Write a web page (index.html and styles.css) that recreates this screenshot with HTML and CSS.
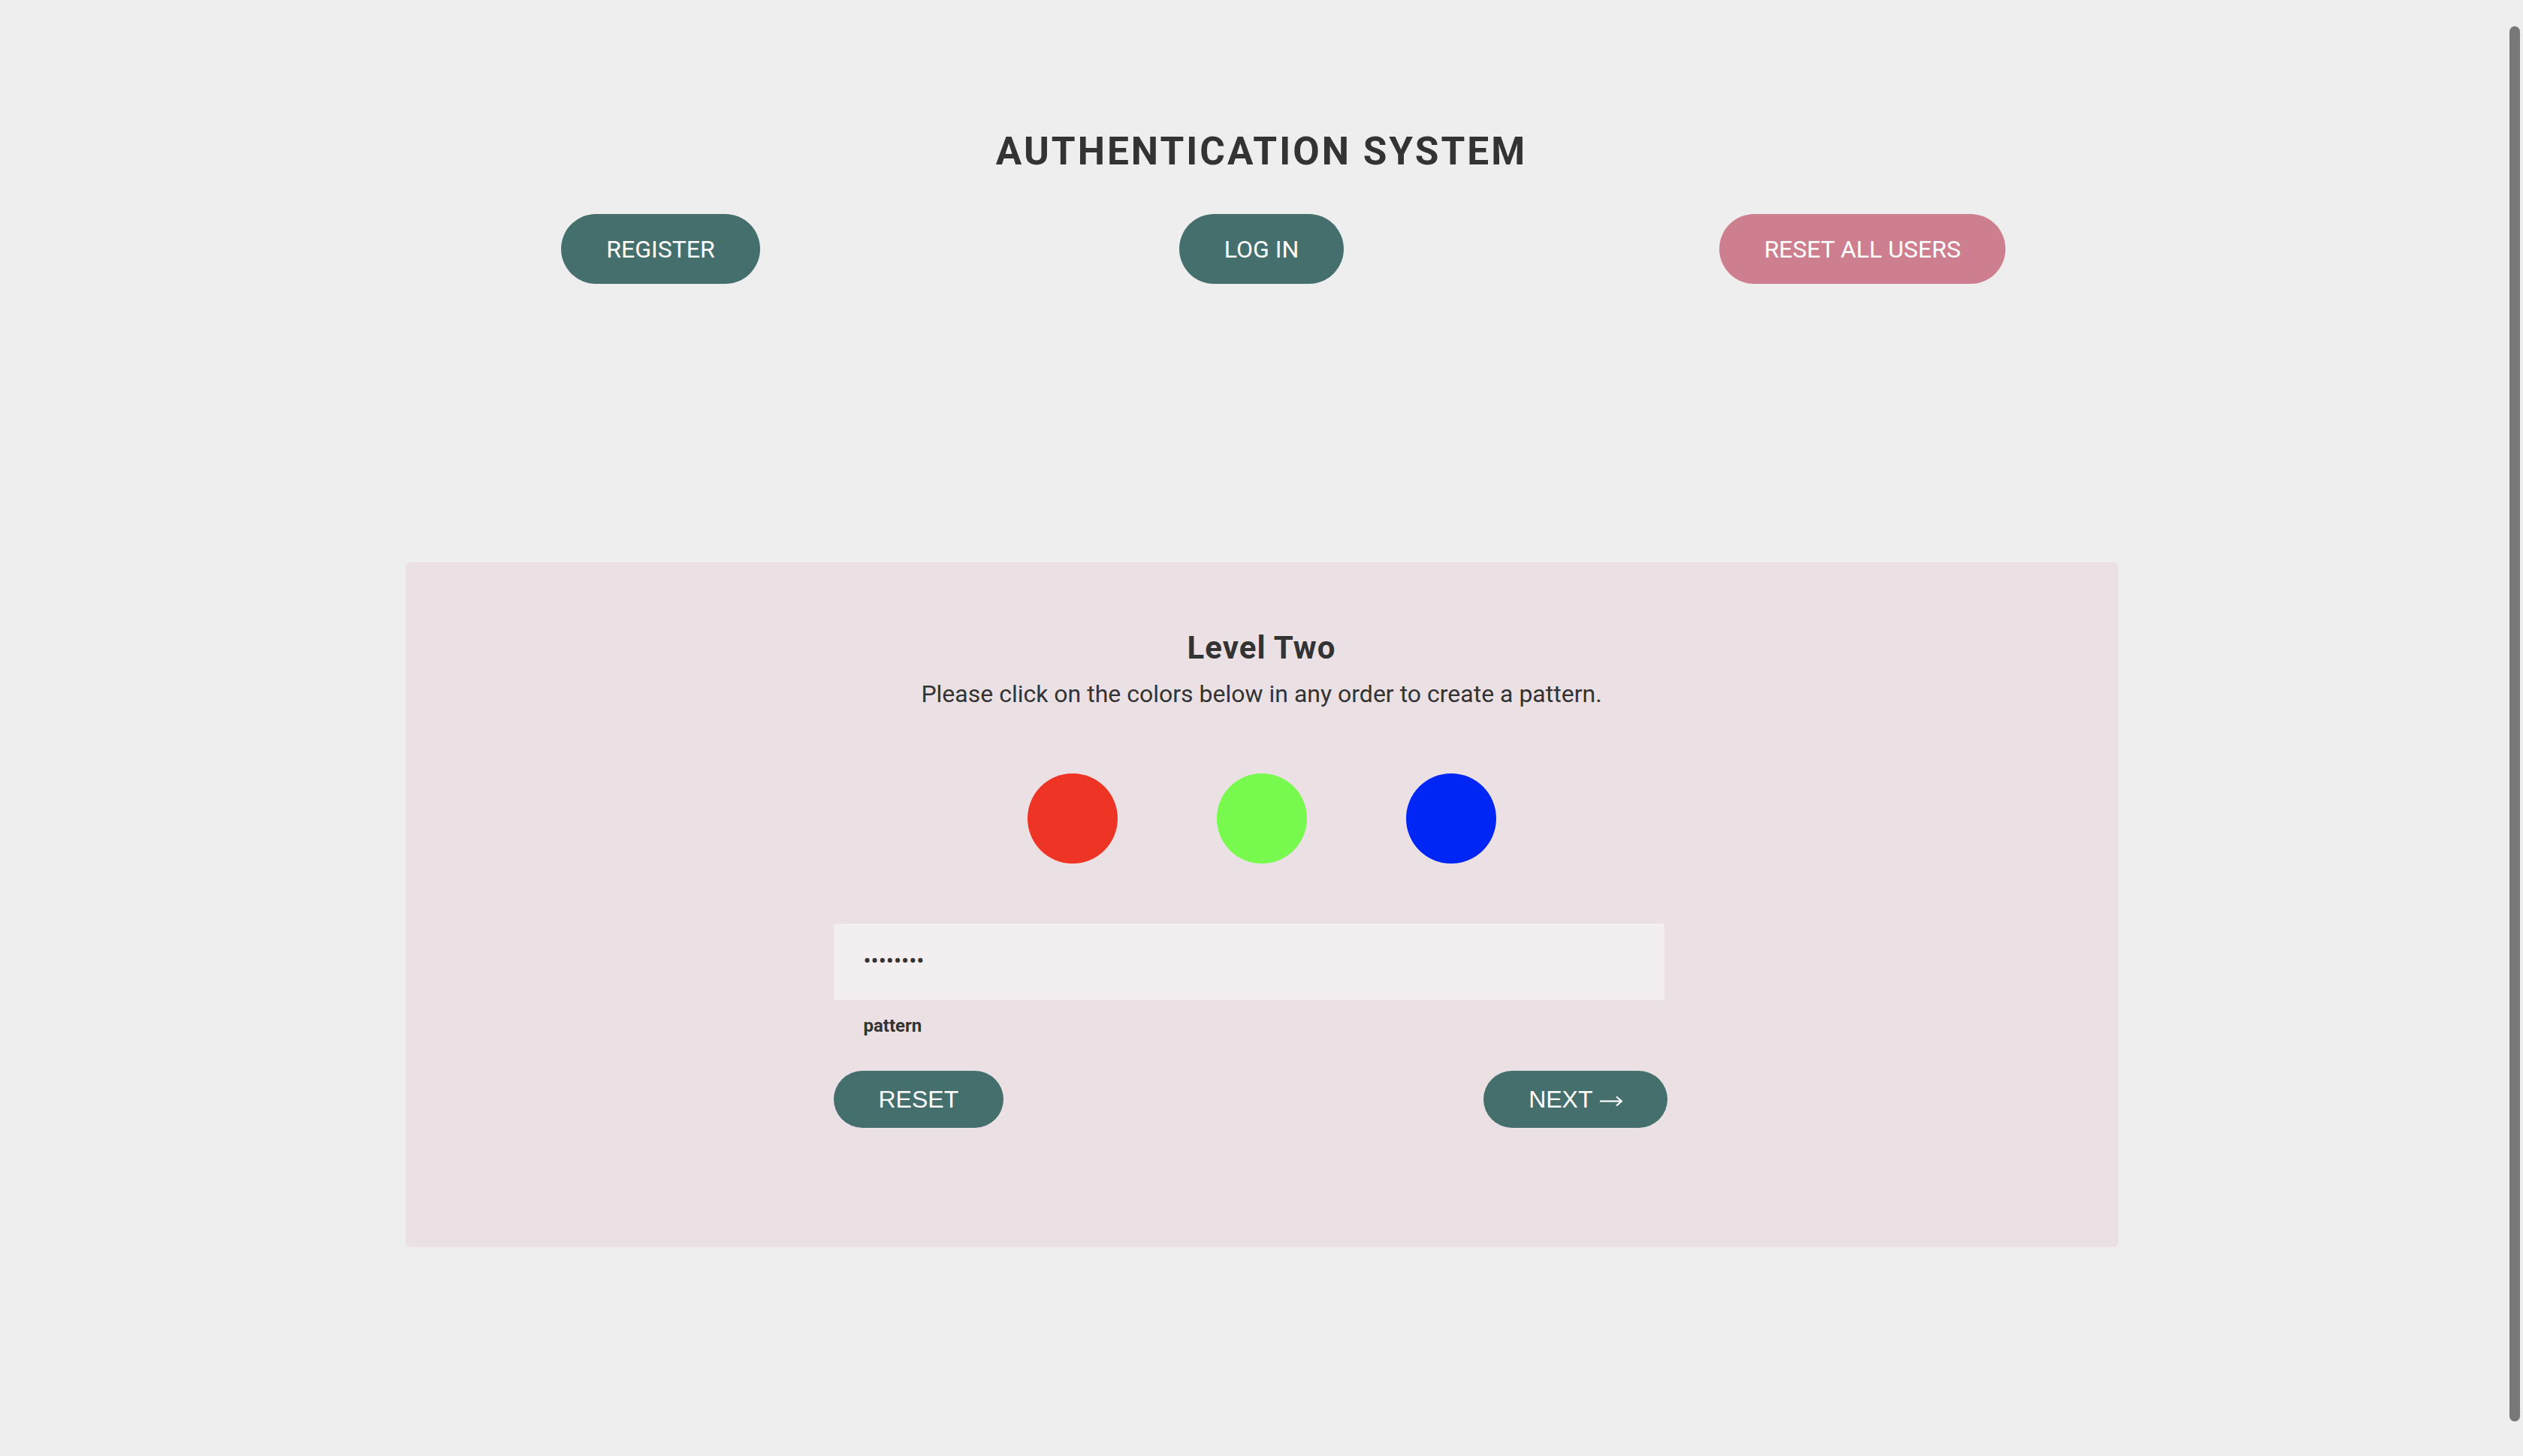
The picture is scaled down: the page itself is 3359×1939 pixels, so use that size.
FILE: index.html
```html
<!DOCTYPE html>
<html lang="en">
<head>
<meta charset="utf-8">
<title>Authentication System</title>
<link rel="stylesheet" href="styles.css">
</head>
<body>
<header class="top">
  <h1 class="title">AUTHENTICATION SYSTEM</h1>
  <nav class="nav">
    <button class="pill pill-teal" type="button">REGISTER</button>
    <button class="pill pill-teal" type="button">LOG IN</button>
    <button class="pill pill-pink" type="button">RESET ALL USERS</button>
  </nav>
</header>
<main class="card">
  <h2 class="level">Level Two</h2>
  <p class="hint">Please click on the colors below in any order to create a pattern.</p>
  <div class="swatches">
    <span class="swatch swatch-red"></span>
    <span class="swatch swatch-green"></span>
    <span class="swatch swatch-blue"></span>
  </div>
  <form class="form">
    <input class="field" type="password" value="12345678" aria-label="pattern">
    <label class="field-label">pattern</label>
    <div class="actions">
      <button class="small-btn" type="button">RESET</button>
      <button class="small-btn" type="button">NEXT <svg class="arrow" width="30" height="14" viewBox="0 0 30 14" aria-hidden="true"><path d="M0 7.5H28.5" stroke="#ffffff" stroke-width="2.2" fill="none"/><path d="M22 1.5L29 7.5L22 13.5" stroke="#ffffff" stroke-width="2.2" fill="none"/></svg></button>
    </div>
  </form>
</main>
<div class="scrollbar"></div>
</body>
</html>
```
FILE: styles.css
```css
html, body {
  margin: 0;
  padding: 0;
}
body {
  background: #eeeeee;
  font-family: Roboto, "Noto Sans", sans-serif;
  color: #333333;
}
.top {
  padding-top: 176px;
}
.title {
  margin: 0;
  font-size: 51.4px;
  line-height: 1;
  font-weight: 700;
  letter-spacing: 3px;
  text-align: center;
  color: #333333;
}
.nav {
  margin-top: 58px;
  display: grid;
  grid-template-columns: repeat(3, 800px);
  justify-content: center;
  justify-items: center;
}
.pill {
  height: 93px;
  padding: 0 60px;
  border: none;
  border-radius: 47px;
  color: #ffffff;
  font-family: Roboto, sans-serif;
  font-size: 32px;
  display: inline-flex;
  align-items: center;
  justify-content: center;
}
.pill-teal { background: #456f6d; }
.pill-pink { background: #cd7f8f; }
.card {
  display: block;
  box-sizing: border-box;
  width: 2280px;
  height: 912px;
  margin: 371px auto 0;
  padding-top: 93px;
  background: #ebe1e4;
  border-radius: 6px;
}
.level {
  margin: 0;
  text-align: center;
  font-size: 42px;
  line-height: 1;
  font-weight: 700;
  letter-spacing: 1px;
  color: #333333;
}
.hint {
  margin: 24px 0 0;
  text-align: center;
  font-size: 32px;
  line-height: 1;
  color: #333333;
}
.swatches {
  margin-top: 90px;
  display: flex;
  justify-content: center;
  gap: 132px;
}
.swatch {
  width: 120px;
  height: 120px;
  border-radius: 50%;
}
.swatch-red { background: #ee3424; }
.swatch-green { background: #78f94e; }
.swatch-blue { background: #0026f5; }
.form {
  width: 1110px;
  margin: 80px 0 0 calc(50% - 570px);
}
.field {
  display: block;
  box-sizing: border-box;
  width: 1106px;
  height: 102px;
  padding: 0 40px 4px;
  border: none;
  border-radius: 3px;
  background: #f3eff0;
  color: #333333;
  font-family: Roboto, sans-serif;
  font-size: 30px;
  outline: none;
}
.field-label {
  display: block;
  margin-top: 22px;
  padding-left: 40px;
  font-size: 24px;
  line-height: 1;
  font-weight: 700;
  color: #333333;
}
.actions {
  margin-top: 48px;
  display: flex;
  justify-content: space-between;
}
.small-btn {
  height: 76px;
  padding: 0 60px;
  border: none;
  border-radius: 38px;
  background: #456f6d;
  color: #ffffff;
  font-family: "Liberation Sans", Arial, sans-serif;
  font-size: 32px;
  display: inline-flex;
  align-items: center;
  gap: 9px;
}
.arrow {
  display: block;
  margin-top: 4px;
}
.scrollbar {
  position: fixed;
  top: 35px;
  right: 4px;
  width: 14px;
  height: 1858px;
  border-radius: 7px;
  background: #787878;
}
```
